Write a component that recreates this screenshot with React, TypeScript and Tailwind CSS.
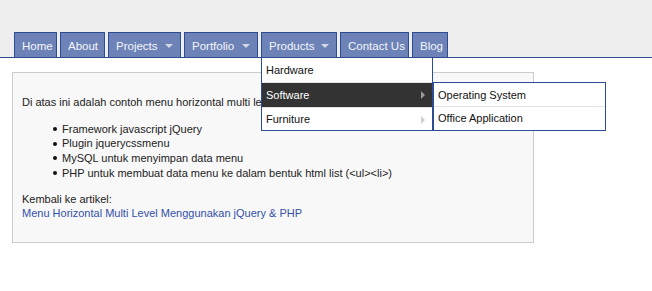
const font = { fontFamily: '"Liberation Sans", Arial, sans-serif' };

type Tab = { label: string; w: number; arrow?: boolean };

const tabs: Tab[] = [
  { label: "Home", w: 43 },
  { label: "About", w: 45 },
  { label: "Projects", w: 73, arrow: true },
  { label: "Portfolio", w: 74, arrow: true },
  { label: "Products", w: 76, arrow: true },
  { label: "Contact Us", w: 69 },
  { label: "Blog", w: 36 },
];

function DownArrow() {
  return (
    <svg width="8" height="5" viewBox="0 0 8 5" className="absolute right-[7px] top-[11px]">
      <path d="M0 0 L8 0 L4 4 Z" fill="#d4d8e4" />
    </svg>
  );
}

function RightArrow({ color }: { color: string }) {
  return (
    <svg width="5" height="8" viewBox="0 0 5 8" className="absolute right-[6px] top-[8px]">
      <path d="M0 0 L4 4 L0 8 Z" fill={color} />
    </svg>
  );
}

function Dropdown() {
  return (
    <div className="absolute left-[-1px] top-[25px] z-10 w-[172px] border border-t-0 border-[#2d4c93] bg-white text-[11px]">
      <div className="relative h-[25px] border-b border-[#e2e2e2] pl-[4px] leading-[25px] text-[#111]">
        Hardware
      </div>
      <div className="relative h-[24px] bg-[#333333] pl-[4px] leading-[24px] text-white">
        Software
        <RightArrow color="#9a9a9a" />
        {/* submenu */}
        <div className="absolute left-[171px] top-[-1px] w-[173px] border border-[#2d4c93] bg-white text-[#111]">
          <div className="h-[24px] border-b border-[#e2e2e2] pl-[4px] leading-[24px]">Operating System</div>
          <div className="h-[23px] pl-[4px] leading-[23px]">Office Application</div>
        </div>
      </div>
      <div className="relative h-[23px] border-t border-[#e2e2e2] pl-[4px] leading-[23px] text-[#111]">
        Furniture
        <RightArrow color="#cfcfcf" />
      </div>
    </div>
  );
}

export default function App() {
  return (
    <div className="min-h-screen bg-white text-[11px] text-[#222]" style={font}>
      {/* Nav */}
      <div className="h-[58px] border-b border-[#2d4c93] bg-[#eeeeee] pt-[32px]">
        <div className="flex gap-[3px] pl-[14px]">
          {tabs.map((t) => (
            <div
              key={t.label}
              className="relative h-[25px] whitespace-nowrap border border-b-0 border-[#2d4c93] bg-[#6d82b6] pl-[7px] text-[11.5px] leading-[26px] text-[#f4f6fb]"
              style={{ width: t.w }}
            >
              {t.label}
              {t.arrow && <DownArrow />}
              {t.label === "Products" && <Dropdown />}
            </div>
          ))}
        </div>
      </div>

      {/* Content */}
      <div className="ml-[12px] mt-[14px] h-[171px] w-[522px] border border-[#cccccc] bg-[#f8f8f8] pl-[9px] pt-[22px] leading-[14.7px]">
        <p>Di atas ini adalah contoh menu horizontal multi level yang dibuat dengan:</p>
        <ul className="mt-[12px] flex flex-col pl-[31px]">
          {[
            "Framework javascript jQuery",
            "Plugin jquerycssmenu",
            "MySQL untuk menyimpan data menu",
            "PHP untuk membuat data menu ke dalam bentuk html list (<ul><li>)",
          ].map((s) => (
            <li key={s} className="flex items-center">
              <span className="mr-[5px] inline-block h-[4px] w-[4px] rounded-full bg-[#111]" />
              {s}
            </li>
          ))}
        </ul>
        <p className="mt-[11px]">Kembali ke artikel:</p>
        <p className="text-[#3350a8]">Menu Horizontal Multi Level Menggunakan jQuery &amp; PHP</p>
      </div>
    </div>
  );
}
